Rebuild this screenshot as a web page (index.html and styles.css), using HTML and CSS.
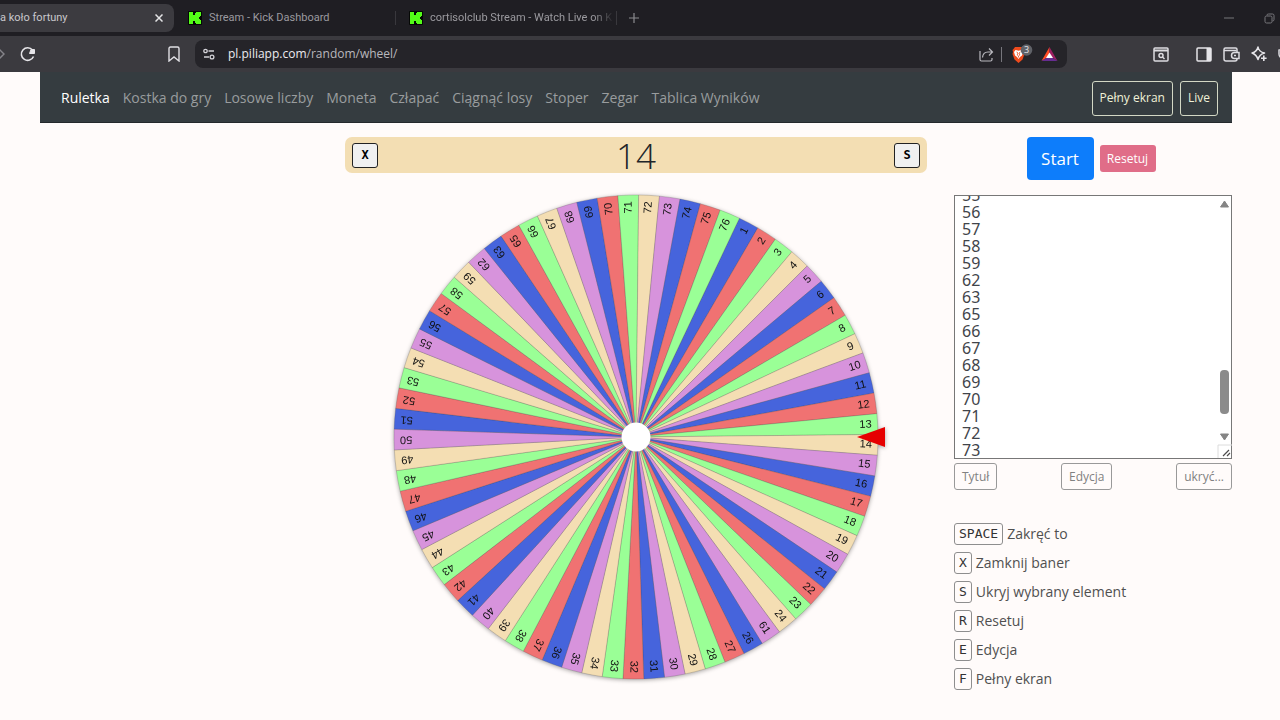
FILE: index.html
```html
<!DOCTYPE html>
<html lang="pl">
<head>
<meta charset="utf-8">
<title>Ruletka koło fortuny</title>
<link rel="stylesheet" href="styles.css">
</head>
<body>
<svg class="defs" aria-hidden="true">
  <symbol id="kick" viewBox="0 0 14 14">
    <rect width="14" height="14" rx="1" fill="#050805"/>
    <path fill="#53fc18" d="M1 1h4v3h2V2h1V1h5v4h-1v1h-1v2h1v1h1v4H8v-1H7v-2H5v3H1z"/>
  </symbol>
</svg>

<header class="browser">
  <div class="tabs">
    <div class="tab tab-active">
      <span class="tab-title">a koło fortuny</span>
      <button class="tab-close" aria-label="Zamknij kartę"><svg width="8" height="8" viewBox="0 0 8 8"><path d="M.5.5l7 7M7.500.5l-7 7" stroke="#e4e4e6" stroke-width="1.500"/></svg></button>
    </div>
    <div class="tab tab-dashboard"><svg class="favicon"><use href="#kick"/></svg><span class="tab-title">Stream - Kick Dashboard</span></div>
    <div class="tab tab-stream"><svg class="favicon"><use href="#kick"/></svg><span class="tab-title fade">cortisolclub Stream - Watch Live on K</span></div>
    <button class="new-tab" aria-label="Nowa karta"><svg width="10" height="10" viewBox="0 0 10 10"><path d="M5 0v10M0 5h10" stroke="#8b8b8f" stroke-width="1.200"/></svg></button>
    <div class="window-controls">
      <svg width="10" height="10" viewBox="0 0 10 10"><path d="M0 5h10" stroke="#77767b"/></svg>
      <svg width="11" height="11" viewBox="0 0 11 11" fill="none" stroke="#77767b"><rect x="1" y="3" width="7" height="7" rx="1.500"/><path d="M3 2.500V2Q3 1 4.500 1H8.500Q10 1 10 2.500v4Q10 8 8.500 8"/></svg>
    </div>
  </div>
  <div class="toolbar">
    <div class="nav-buttons">
      <svg width="5" height="12" viewBox="0 0 5 12" fill="none" stroke="#85848a" stroke-width="1.500"><path d="M-1 1l5 5-5 5"/></svg>
      <svg class="reload" width="17" height="16" viewBox="0 0 17 16"><path d="M13.500 10.500A6.300 6.300 0 1 1 12.500 4" fill="none" stroke="#e6e5e9" stroke-width="1.600"/><path d="M11 3.500L14.500 3.500V7.500H9.500z" fill="#e6e5e9" stroke="#e6e5e9" stroke-linejoin="round"/></svg>
      <svg class="bookmark" width="12" height="16" viewBox="0 0 12 16"><path d="M1 2.500Q1 1 2.500 1h7Q11 1 11 2.500V15l-5-4-5 4z" fill="none" stroke="#e0dfe4" stroke-width="1.400"/></svg>
    </div>
    <div class="address">
      <svg width="12" height="12" viewBox="0 0 12 12" fill="none" stroke="#d4d3d8" stroke-width="1.300"><circle cx="2.500" cy="3" r="1.700"/><path d="M5.500 3H11M1 9h5"/><circle cx="9" cy="9" r="1.900"/></svg>
      <span class="url"><span class="host">pl.piliapp.com</span>/random/wheel/</span>
      <svg class="share" width="15" height="15" viewBox="0 0 15 15" fill="none" stroke="#b9b8be" stroke-width="1.200"><path d="M1 4v8.500Q1 14 2.500 14h9q1.500 0 1.500-1.500V11"/><path d="M3.500 10.500Q4 5 9 5h4M10 1.500L13.500 5 10 8.500"/></svg>
      <span class="sep"></span>
      <svg class="shield" width="22" height="20" viewBox="0 0 22 20"><path d="M4 3h7l1.500 2 1 1-.5 2 .5 2-2 5.500L7.500 19 3.500 15.500 1.500 10 2 8 1.500 6 2.500 5z" fill="#ef4b1d"/><path d="M4.500 6l3 .7 3-.7 1.500 2-1 3.500-2 1.500-1.500 2-1.500-2-2-1.500-1-3.500z" fill="#fff"/><path d="M5.500 8l1.500 1-.8 2 1.300 1 1.300-1L8 9l1.500-1M7.500 12v1.500" fill="none" stroke="#ef4b1d" stroke-width=".8"/><circle cx="15.500" cy="6" r="5.800" fill="#606268"/><text x="15.500" y="9" class="count">3</text></svg>
      <svg width="17" height="16" viewBox="0 0 17 16"><path d="M8.500 1L.5 15 8.500 10z" fill="#ff4b24"/><path d="M8.500 1l8 14-8-5z" fill="#9e1f63"/><path d="M.5 15h16l-8-5z" fill="#662d91"/><path d="M8.500 6.500L12 12H5z" fill="#fff"/></svg>
    </div>
    <div class="extensions">
      <svg width="16" height="15" viewBox="0 0 16 15" fill="none" stroke="#dddce1" stroke-width="1.500"><rect x="1" y="1" width="14" height="13" rx="1"/><path d="M1 3.500h14" stroke-width="2"/><circle cx="8" cy="8.500" r="2"/><path d="M9.500 10l2 2"/></svg>
      <span class="sep sep-dark"></span>
      <svg width="16" height="15" viewBox="0 0 16 15"><rect x="1" y="1" width="14" height="13" rx="1" fill="none" stroke="#e6e5e9" stroke-width="1.500"/><path d="M10.500 1H15v13h-4.500z" fill="#e6e5e9"/></svg>
      <svg width="17" height="15" viewBox="0 0 17 15" fill="none" stroke="#dddce1" stroke-width="1.500"><path d="M14 5V2.500Q14 1 12.500 1h-10Q1 1 1 2.500V12q0 2 2 2h9q2 0 2-2"/><path d="M1 3.500h12.500M16 5.500h-4.500a3 3 0 0 0 0 6H16zM11 8.500h2"/></svg>
      <svg width="16" height="16" viewBox="0 0 16 16"><path d="M7 1q.8 4.800 6.500 6-5 1.200-6.500 6.500Q5.500 8.500 1 7q4.800-1.200 6-6z" fill="none" stroke="#e6e5e9" stroke-width="1.500" stroke-linejoin="round"/><path d="M12.800 9.500v5.600M10 12.300h5.600" stroke="#e6e5e9" stroke-width="1.600"/></svg>
      <svg width="14" height="14" viewBox="0 0 14 14" fill="none" stroke="#dddce1" stroke-width="1.500"><path d="M7 1L1 3v4q0 4 6 6 6-2 6-6V3z"/></svg>
    </div>
  </div>
</header>

<div class="page">
  <nav class="navbar">
    <a class="current" href="#">Ruletka</a><a href="#">Kostka do gry</a><a href="#">Losowe liczby</a><a href="#">Moneta</a><a href="#">Człapać</a><a href="#">Ciągnąć losy</a><a href="#">Stoper</a><a href="#">Zegar</a><a href="#">Tablica Wyników</a>
    <div class="nav-actions"><button>Pełny ekran</button><button>Live</button></div>
  </nav>
  <main class="layout">
    <section class="stage">
      <div class="banner"><button aria-label="Zamknij baner">X</button><output class="result">14</output><button aria-label="Ukryj wybrany element">S</button></div>
      <svg class="wheel" id="wheel" viewBox="-242 -242 484 484" role="img" aria-label="Koło fortuny"></svg>
    </section>
    <aside class="side">
      <div class="actions"><button class="start">Start</button><button class="reset">Resetuj</button></div>
      <div class="list">
        <textarea id="items" aria-label="Elementy koła"></textarea>
        <svg class="scrollbar" width="16" height="262" viewBox="0 0 16 262" aria-hidden="true"><path d="M8.500 5l4 6h-8zM8.500 244l4-6h-8z" fill="#858585" stroke="#858585" stroke-linejoin="round"/><rect x="4" y="174" width="9" height="44" rx="4" fill="#8b8b8b"/><path d="M2 262v-13h14" fill="none" stroke="#dcdcdc"/><path d="M7 260l6-6M11 260l3-3" stroke="#4c4c4c" stroke-width="1.200"/></svg>
      </div>
      <div class="list-tools"><button>Tytuł</button><button>Edycja</button><button>ukryć...</button></div>
      <ul class="shortcuts">
        <li><kbd>SPACE</kbd>Zakręć to</li>
        <li><kbd>X</kbd>Zamknij baner</li>
        <li><kbd>S</kbd>Ukryj wybrany element</li>
        <li><kbd>R</kbd>Resetuj</li>
        <li><kbd>E</kbd>Edycja</li>
        <li><kbd>F</kbd>Pełny ekran</li>
      </ul>
    </aside>
  </main>
</div>
<script src="wheel.js"></script>
</body>
</html>
```

FILE: styles.css
```css
* { box-sizing: border-box; }
body {
  margin: 0;
  background: #fffbfa;
  color: #212529;
  font: 14px/20px "Open Sans", "Noto Sans", sans-serif;
  overflow-x: hidden;
}
button { font: inherit; cursor: pointer; }
svg { flex: none; display: block; }
.defs { display: none; }

/* browser frame */
.browser { overflow: hidden; font-size: 12px; }
.tabs { display: flex; align-items: center; height: 36px; background: #1f1e23; color: #9b9a9f; font-family: Roboto, "Open Sans", sans-serif; font-size: 11px; }
.tab { display: flex; align-items: center; height: 28px; white-space: nowrap; }
.tab-active { width: 174px; padding-right: 10px; justify-content: space-between; background: #3c3b40; color: #c9c8cc; border-radius: 0 8px 8px 0; }
.tab-close, .new-tab { display: flex; padding: 0; border: 0; background: none; }
.tab-close { padding: 0 1px; }
.favicon { width: 14px; height: 14px; margin-right: 7px; }
.tab-dashboard { width: 222px; padding-left: 14px; }
.tab-stream { width: 221px; padding: 0 12px 0 13px; }
.tab-dashboard, .tab-stream { background: linear-gradient(#39383d, #39383d) right center / 1px 14px no-repeat; }
.fade { -webkit-mask-image: linear-gradient(90deg, #000 164px, transparent 184px); mask-image: linear-gradient(90deg, #000 164px, transparent 184px); }
.new-tab { margin-left: 12px; }
.window-controls { display: flex; align-items: center; gap: 30px; margin-left: auto; padding-right: 5px; }
.toolbar { display: flex; align-items: center; height: 36px; background: #3b3a3f; }
.nav-buttons { display: flex; align-items: center; width: 195px; padding-right: 15px; }
.reload { margin-left: 15px; }
.bookmark { margin-left: auto; }
.address { display: flex; flex: 1; align-items: center; height: 28px; padding: 0 9px 0 8px; border-radius: 8px; background: #252429; }
.url { margin-left: 13px; color: #b9b8bd; }
.host { color: #ecebf0; }
.share { margin-left: auto; }
.sep { width: 1px; height: 15px; margin: 0 9px 0 7px; background: #77767c; }
.shield { margin-right: 8px; }
.count { font: 9px "Open Sans", sans-serif; fill: #e5e5e9; text-anchor: middle; }
.extensions { display: flex; align-items: center; gap: 11px; width: 213px; padding-left: 86px; }
.sep-dark { margin: 0 2px 0 3px; background: #252429; }

/* page */
.page { padding: 0 48px 0 40px; }
.navbar { display: flex; align-items: center; gap: 13px; height: 51px; padding: 2px 14px 0 21px; background: #353c40; border-bottom: 1px solid #24292c; }
.navbar a { color: #999c9e; text-decoration: none; white-space: nowrap; }
.navbar .current { color: #fff; }
.nav-actions { display: flex; gap: 7px; margin-left: auto; }
.nav-actions button { height: 35px; padding: 0 7px; border: 1px solid #d3d8c5; border-radius: 3px; background: none; color: #f0f1d8; font-size: 12px; }

.layout { display: grid; grid-template-columns: 1fr 2fr 1fr; padding-top: 14px; }
.stage { grid-column: 2; padding: 0 7px; }
.banner { display: flex; align-items: center; justify-content: space-between; height: 36px; padding: 0 7px; border-radius: 7px; background: #f3deb3; }
.banner button { width: 26px; height: 25px; padding: 0; border: 1px solid #222; border-radius: 3px; background: #f0f0f0; color: #000; font: bold 12px/22px "DejaVu Sans Mono", monospace; }
.result { padding-top: 2px; font-size: 35px; font-weight: 300; line-height: 36px; }
.wheel { width: 100%; max-width: 484px; margin: 22px auto 0; overflow: visible; filter: drop-shadow(0 1px 2px rgba(0, 0, 0, .35)); }
.wheel text { font: 11px "Liberation Sans", Arial, sans-serif; text-anchor: end; fill: #111; }
.slice { stroke: rgba(60, 60, 60, .4); stroke-width: .5; }

.side { padding-left: 20px; }
.actions { display: flex; align-items: center; justify-content: center; gap: 6px; height: 43px; padding-right: 4px; }
.actions button { padding: 0; border: 0; color: #fff; }
.actions .start { width: 67px; height: 43px; border-radius: 4px; background: #0d7dfb; font-size: 17px; }
.actions .reset { width: 56px; height: 27px; border-radius: 3px; background: #e06d88; font-size: 12px; }
.list { position: relative; margin-top: 15px; }
.list textarea { display: block; width: 100%; height: 264px; padding: 0 7px; border: 1px solid #777; background: #fff; color: #41444a; font: 16px/17px "Noto Sans", sans-serif; resize: none; scrollbar-width: none; }
.scrollbar { position: absolute; top: 1px; right: 0; }
.list-tools { display: flex; justify-content: space-between; margin-top: 4px; }
.list-tools button { height: 27px; padding: 0 7px; border: 1px solid #999; border-radius: 3px; background: none; color: #818181; font-size: 12px; }
.shortcuts { display: flex; flex-direction: column; gap: 7px; margin: 33px 0 0; padding: 0 0 30px; list-style: none; color: #505050; }
.shortcuts li { display: flex; align-items: center; gap: 4px; height: 22px; }
kbd { height: 22px; padding: 0 4px; border: 1px solid #8e8e8e; border-radius: 3px; color: #333; font: 13px/20px "DejaVu Sans Mono", monospace; }
```

FILE: wheel.js
```js
const range = (from, to) => Array.from({ length: to - from + 1 }, (_, i) => from + i);
const items = [...range(1, 24), 61, ...range(26, 59), 62, 63, ...range(65, 76)];
const colors = ["#4664dc", "#f07272", "#9aff96", "#f4deb3", "#d793dc"];
const radius = 242;
const step = 360 / items.length;
const start = -0.6 - 13 * step;
const point = (deg) => {
  const a = deg * Math.PI / 180;
  return `${(radius * Math.cos(a)).toFixed(2)} ${(radius * Math.sin(a)).toFixed(2)}`;
};

let markup = "";
items.forEach((item, i) => {
  const from = start + i * step;
  const to = from + step;
  markup += `<path class="slice" fill="${colors[i % 5]}" d="M0 0L${point(from)}A${radius} ${radius} 0 0 1 ${point(to)}z"/>`;
  markup += `<text x="236" y="3" transform="rotate(${((from + to) / 2).toFixed(2)})">${item}</text>`;
});
markup += '<circle r="14.500" fill="#fff"/>';
markup += '<path d="M221 0L249-10V10z" fill="#e60000"/>';
document.getElementById("wheel").innerHTML = markup;

const box = document.getElementById("items");
box.value = items.join("\n");
box.scrollTop = items.indexOf(56) * 17 - 8;
```
